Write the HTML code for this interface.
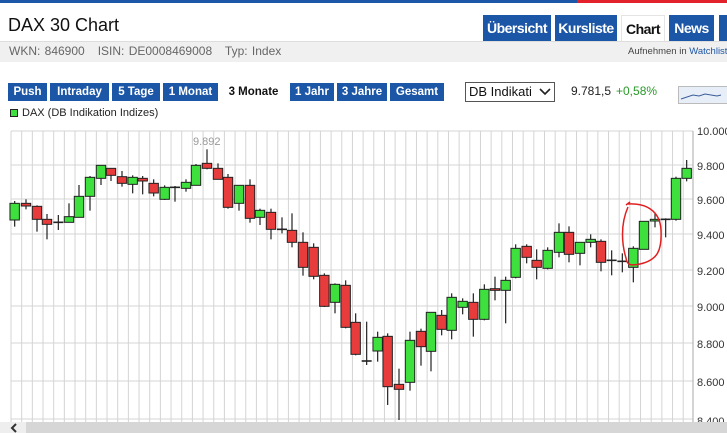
<!DOCTYPE html>
<html><head><meta charset="utf-8">
<style>
*{margin:0;padding:0;box-sizing:border-box}
body{width:727px;height:433px;overflow:hidden;background:#fff;font-family:"Liberation Sans",sans-serif;position:relative}
.a{position:absolute;white-space:nowrap}
.tab{position:absolute;top:15px;height:26px;background:#1c56a6;color:#fff;font-weight:bold;font-size:14px;line-height:26px;text-align:center;letter-spacing:-0.5px;white-space:nowrap;overflow:hidden}
.btn{position:absolute;top:83px;height:18px;background:#1c56a6;color:#fff;font-weight:bold;font-size:11.5px;line-height:18px;text-align:center;white-space:nowrap}
</style></head><body>
<div class="a" style="left:0;top:0;width:577px;height:3px;background:#1c56a6"></div>
<div class="a" style="left:577px;top:0;width:150px;height:3px;background:#e3212b"></div>
<div class="a" style="left:8px;top:15px;font-size:18px;color:#111">DAX 30 Chart</div>
<div class="tab" style="left:483px;width:68px">Übersicht</div>
<div class="tab" style="left:555px;width:62px">Kursliste</div>
<div class="tab" style="left:621px;width:44px;background:#fff;color:#111;border:1px solid #e4e4e4;border-bottom:none">Chart</div>
<div class="tab" style="left:669px;width:45px">News</div>
<div class="tab" style="left:719px;width:20px"></div>
<div class="a" style="left:0;top:41px;width:727px;height:21px;background:#f0f0f0;border-top:1px solid #ddd"></div>
<div class="a" style="left:9px;top:44px;font-size:12px;color:#666;word-spacing:1px">WKN: 846900&nbsp;&nbsp; ISIN: DE0008469008&nbsp;&nbsp; Typ: Index</div>
<div class="a" style="left:628px;top:46px;font-size:9.5px;color:#444">Aufnehmen in <span style="color:#1c56a6">Watchliste</span></div>
<div class="btn" style="left:8px;width:39px">Push</div>
<div class="btn" style="left:50px;width:59px">Intraday</div>
<div class="btn" style="left:112px;width:48px">5 Tage</div>
<div class="btn" style="left:163px;width:55px">1 Monat</div>
<div class="btn" style="left:221px;width:65px;background:#fff;color:#111">3 Monate</div>
<div class="btn" style="left:290px;width:44px">1 Jahr</div>
<div class="btn" style="left:337px;width:50px">3 Jahre</div>
<div class="btn" style="left:390px;width:54px">Gesamt</div>
<div class="a" style="left:465px;top:82px;width:90px;height:20px;border:1px solid #555;font-size:13px;line-height:18px;padding-left:3px;color:#111">DB Indikati
<svg class="a" style="right:3px;top:5px" width="12" height="8"><path d="M1 1 L6 6 L11 1" stroke="#222" stroke-width="1.6" fill="none"/></svg></div>
<div class="a" style="left:571px;top:84px;font-size:12px;color:#222">9.781,5</div>
<div class="a" style="left:616px;top:84px;font-size:12px;color:#2a9a2a">+0,58%</div>
<div class="a" style="left:678px;top:86px;width:50px;height:18px;border:1px solid #bbb;background:#e8eef8">
<svg width="50" height="18" class="a" style="left:0;top:0"><path d="M2 12 L8 10 L14 8 L20 9 L26 7 L32 8 L38 9 L42 8" stroke="#3a5c9a" fill="none"/></svg></div>
<div class="a" style="left:10px;top:109px;width:8px;height:8px;background:#3ee03e;border:1px solid #222"></div>
<div class="a" style="left:22px;top:107px;font-size:11px;color:#222">DAX (DB Indikation Indizes)</div>
<svg class="a" style="left:0;top:120px" width="727" height="313" id="ch">
<g id="grid"></g>
<g id="cd"></g>
<g font-size="11" fill="#333" font-family="Liberation Sans,sans-serif">
<text x="697" y="15">10.000</text><text x="697" y="50">9.800</text><text x="697" y="84">9.600</text><text x="697" y="119">9.400</text><text x="697" y="155">9.200</text><text x="697" y="191">9.000</text><text x="697" y="228">8.800</text><text x="697" y="266">8.600</text><text x="697" y="305">8.400</text>
<text x="193" y="25" fill="#999">9.892</text></g>
<path d="M626 85 L630 82 M628 84 C645 83 660 90 661 110 C662 130 658 140 640 144 C630 146 627 145 626 138 C622 125 620 105 628 87" stroke="#e02020" stroke-width="1.5" fill="none"/>
</svg>
<div class="a" style="left:0;top:422px;width:727px;height:11px;background:#d6d6d6"></div>
<div class="a" style="left:0;top:422px;width:26px;height:11px;background:#eee"></div>
<svg class="a" style="left:9px;top:423px" width="10" height="10"><path d="M7 1 L3 5 L7 9" stroke="#333" stroke-width="2" fill="none"/></svg>
<script>
var g='',i;
for(i=0;i<65;i++){var x=11+i*10.67;if(x>693)break;g+='<line x1="'+x+'" y1="11" x2="'+x+'" y2="302" stroke="#d4d4d4"/>';}
[11,45,79,114,150,186,223,261,299].forEach(function(y){g+='<line x1="11" y1="'+y+'" x2="693" y2="'+y+'" stroke="#d4d4d4"/>';});
g+='<line x1="693" y1="11" x2="693" y2="302" stroke="#aaa"/>';
document.getElementById('grid').innerHTML=g;
var A=[[44,220,270,213,290,1],[78,220,228,208,238,0],[111,229,268,226,305,0],[141,268,283,252,328,0],[175,277,277,255,300,2],[207,260,277,220,277,1],[237,199,262,165,262,1],[270,142,199,138,242,1],[303,106,145,106,165,1],[333,115,136,115,153,0],[366,140,160,123,170,0],[398,142,163,136,190,1],[428,145,153,138,193,0],[461,160,189,148,199,0],[494,172,208,166,210,1],[525,172,172,168,215,2],[558,157,175,148,185,1],[588,106,166,102,166,1],[621,100,115,58,118,0],[654,115,148,100,148,0],[684,142,232,132,236,0],[717,166,220,166,242,1],[750,166,265,148,278,0],[780,241,262,236,285,1],[813,247,298,236,328,0],[846,298,298,262,310,2],[876,301,337,250,352,0],[909,337,412,307,437,0],[941,352,439,340,448,0],[973,436,529,430,531,0],[1005,463,517,460,550,1],[1037,466,592,451,595,0],[1067,577,673,550,676,0]];
var B=[[20,693,693,575,705,2],[53,622,663,605,695,1],[83,619,770,610,825,0],[117,763,778,716,870,0],[150,631,757,605,782,1],[183,604,650,596,707,0],[213,547,664,547,724,1],[245,556,598,540,616,0],[275,502,601,490,628,1],[308,514,532,505,553,1],[340,517,568,490,620,0],[373,478,568,463,571,1],[405,476,481,440,511,0],[437,451,481,440,580,1],[467,355,442,343,445,1],[500,349,382,343,400,0],[530,391,412,358,448,0],[563,361,415,352,418,1],[597,307,367,280,382,1],[627,307,373,289,397,0],[660,337,370,337,406,1],[692,328,337,313,352,1],[723,334,397,328,424,0],[755,391,391,361,436,2],[787,394,394,370,427,2],[820,355,412,349,457,1],[852,274,358,274,358,1],[885,268,273,250,292,1],[917,268,268,265,322,2],[948,145,268,140,272,1],[980,115,145,90,154,1]];
var s='';
function add(d,ox){var x=ox+d[0]/3,bt=10+d[1]/3,bb=10+d[2]/3,wt=10+d[3]/3,wb=10+d[4]/3;
s+='<line x1="'+x+'" y1="'+wt+'" x2="'+x+'" y2="'+wb+'" stroke="#222" stroke-width="1.2"/>';
if(d[5]==2){s+='<line x1="'+(x-5)+'" y1="'+bt+'" x2="'+(x+5)+'" y2="'+bt+'" stroke="#222" stroke-width="1.6"/>';}
else s+='<rect x="'+(x-4.7)+'" y="'+bt+'" width="9.4" height="'+Math.max(bb-bt,1.5)+'" fill="'+(d[5]?'#3ee03e':'#e83c3c')+'" stroke="#222" stroke-width="1"/>';}
A.forEach(function(d){add(d,0)});B.forEach(function(d){add(d,360)});
document.getElementById('cd').innerHTML=s;
</script>
</body></html>
